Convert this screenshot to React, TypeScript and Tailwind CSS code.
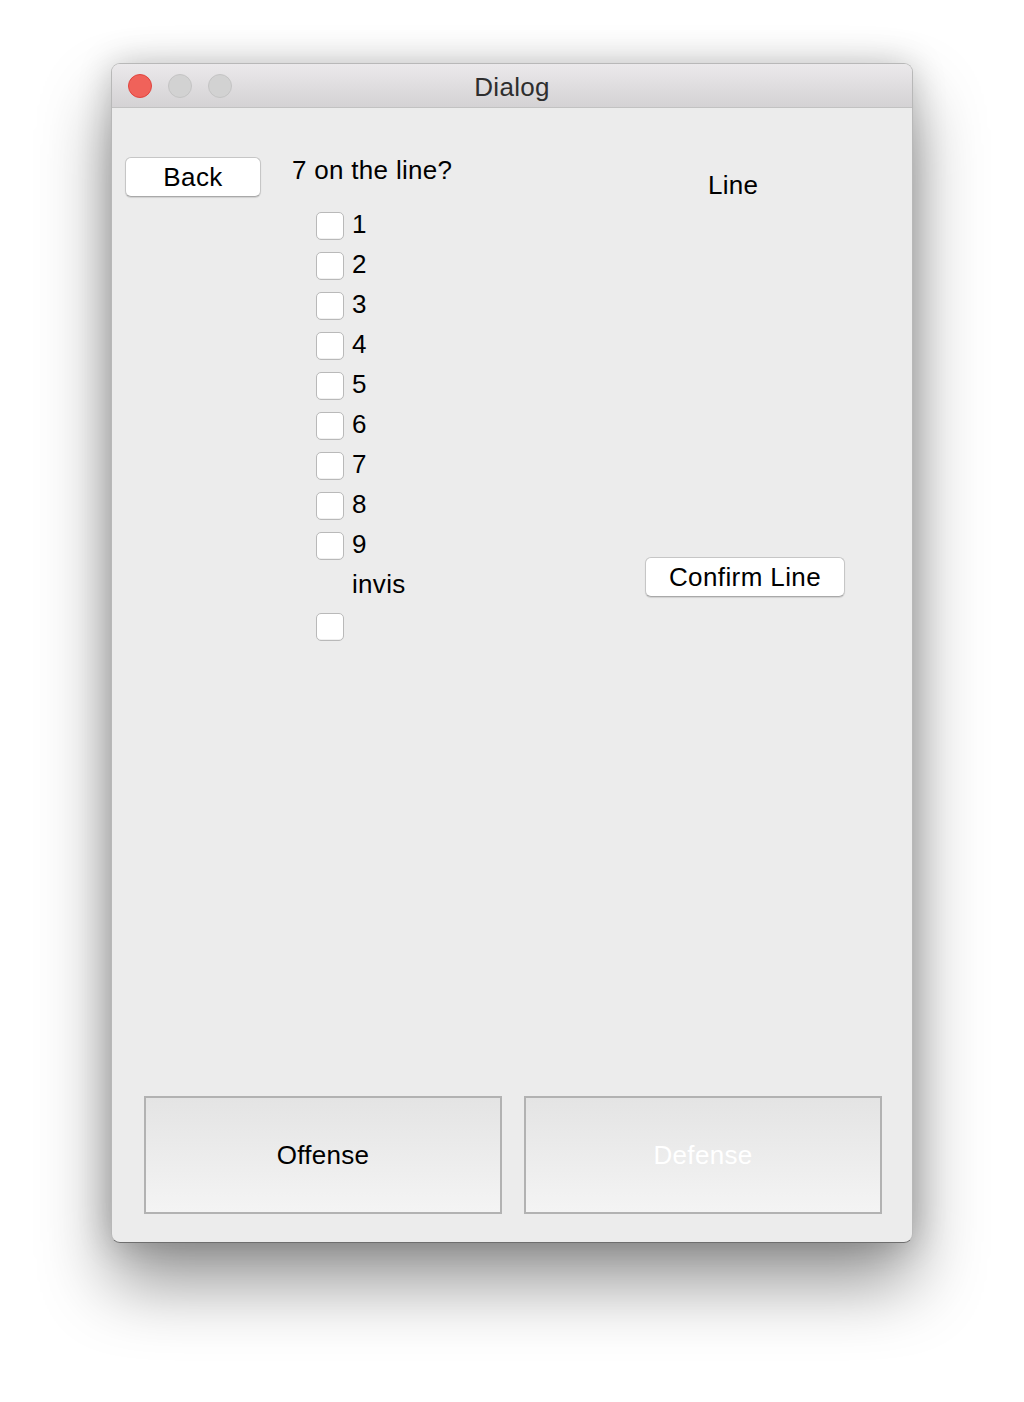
import React from "react";

const font = { fontFamily: '"Liberation Sans", Arial, sans-serif' };

function Check({ label }: { label?: string }) {
  return (
    <div className="flex h-[40px] items-center">
      <span className="block h-[28px] w-[28px] rounded-[5px] border border-[#b9b9b9] bg-white shadow-[inset_0_-1px_0_#f0f0f0]" />
      {label && <span className="ml-[8px] -mt-[4px] text-[26px] text-black">{label}</span>}
    </div>
  );
}

function PushButton({ children, className }: { children: React.ReactNode; className: string }) {
  return (
    <button className={`flex items-center justify-center rounded-[6px] border border-[#c6c6c6] border-b-[#a9a9a9] bg-white text-[26px] tracking-[0.4px] text-black shadow-[0_1px_1px_rgba(0,0,0,0.12)] ${className}`}>
      {children}
    </button>
  );
}

export default function App() {
  const rows = ["1", "2", "3", "4", "5", "6", "7", "8", "9"];
  return (
    <div className="min-h-[1402px] w-[1024px] bg-white pt-[63px]" style={font}>
      <div className="ml-[111px] flex h-[1180px] w-[802px] flex-col overflow-hidden rounded-[9px] border border-[#b8b8b8] border-b-[#6e6e6e] bg-[#ececec] shadow-[0_40px_70px_rgba(0,0,0,0.42),0_0_34px_rgba(0,0,0,0.2)]">
        {/* title bar */}
        <div className="relative flex h-[44px] items-center border-b border-[#c2c2c2] bg-gradient-to-b from-[#ebe9eb] to-[#d4d2d4]">
          <div className="absolute inset-0 flex items-center justify-center pt-[3px] text-[26px] tracking-[0.3px] text-[#2e2e2e]">
            Dialog
          </div>
          <div className="relative ml-[16px] flex gap-[16px]">
            <span className="h-[24px] w-[24px] rounded-full border border-[#e0443e] bg-[#f0625a]" />
            <span className="h-[24px] w-[24px] rounded-full border border-[#c4c4c4] bg-[#d2d2d2]" />
            <span className="h-[24px] w-[24px] rounded-full border border-[#c4c4c4] bg-[#d2d2d2]" />
          </div>
        </div>

        {/* body */}
        <div className="flex flex-1 flex-col">
          <div className="flex">
            <div className="ml-[13px] mt-[49px]">
              <PushButton className="h-[40px] w-[136px]">Back</PushButton>
            </div>
            <div className="ml-[31px] mt-[47px] w-[300px]">
              <div className="h-[30px] text-[26px] leading-[30px] tracking-[0.3px] text-black">7 on the line?</div>
              <div className="ml-[24px] mt-[21px]">
                {rows.map((r) => (
                  <Check key={r} label={r} />
                ))}
                <div className="ml-[36px] h-[41px] text-[26px] leading-[36px] tracking-[0.3px] text-black">invis</div>
                <Check />
              </div>
            </div>
            <div className="ml-[53px] mt-[62px] flex w-[200px] flex-col">
              <div className="ml-[63px] h-[30px] text-[26px] leading-[30px] tracking-[0.3px] text-black">Line</div>
              <div className="mt-[357px]">
                <PushButton className="h-[40px] w-[200px]">Confirm Line</PushButton>
              </div>
            </div>
          </div>

          <div className="mt-auto mb-[28px] ml-[32px] flex gap-[22px]">
            <button className="flex h-[118px] w-[358px] items-center justify-center border-2 border-[#b2b2b2] bg-gradient-to-b from-[#e4e4e4] to-[#f4f4f4] text-[26px] tracking-[0.3px] text-black">
              Offense
            </button>
            <button className="flex h-[118px] w-[358px] items-center justify-center border-2 border-[#b2b2b2] bg-gradient-to-b from-[#e4e4e4] to-[#f4f4f4] text-[26px] tracking-[0.3px] text-white">
              Defense
            </button>
          </div>
        </div>
      </div>
    </div>
  );
}
